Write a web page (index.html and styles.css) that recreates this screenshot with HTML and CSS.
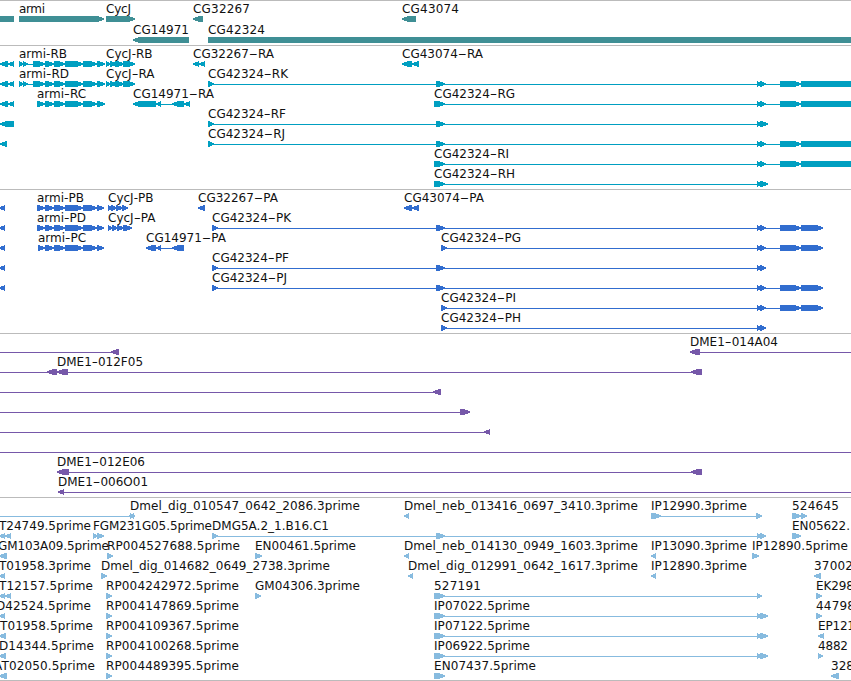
FILE: index.html
```html
<!DOCTYPE html>
<html lang="en">
<head>
<meta charset="utf-8">
<title>Genome tracks</title>
<link rel="stylesheet" href="styles.css">
</head>
<body>
<main class="browser" id="browser"></main>
<script src="tracks.js"></script>
</body>
</html>
```
FILE: styles.css
```css
body {
  margin: 0;
  background: #fff;
}

.browser {
  display: flex;
  flex-direction: column;
  width: 851px;
  height: 680px;
  overflow: hidden;
  border-bottom: 1px solid #bbb;
}

.track {
  display: flex;
  flex-direction: column;
  flex: none;
  border-top: 1px solid #bbb;
  padding-bottom: 3px;
}

.row {
  display: block;
  flex: none;
  width: 851px;
  height: 20px;
  overflow: visible;
  font: 12px "DejaVu Sans", sans-serif;
}

.row text {
  fill: #111;
}

.row polygon,
.row rect {
  shape-rendering: crispEdges;
}

.genes { fill: #3f8f95; padding-bottom: 2px; }
.genes .row { height: 21px; }
.transcripts { fill: #009fc1; }
.proteins { fill: #316dcf; }
.clones { fill: #7658a9; }
.ests { fill: #87bbdf; padding-bottom: 2px; }
```
FILE: tracks.js
```js
// Row grammar, items separated by spaces:
//   >a,b  exon pointing right     <a,b  exon pointing left
//   =a,b  plain block             -a,b  intron line
//   name@a,b  label spanning a..b
const armi = ">37,45 >45,54 >54,65 >65,83 >83,97 ";
const fullEnd = "-436,801 >436,445 >757,762 >760,766 >780,801 ";
const shortEnd = "-436,760 >436,445 >757,762 ";
const cds = fullEnd + ">801,823 ";

const tracks = [
  ["genes", [
    "=0,14 armi@19,45 >19,104 CycJ@106,131 >106,135 CG32267@193,250 <193,203 CG43074@402,459 <402,416",
    "CG14971@133,189 <133,189 CG42324@208,265 =208,851"
  ]],
  ["transcripts", [
    "<0,8 <8,14 armi-RB@19,67 -19,37 >19,24 >23,28 >33,45 " + armi + ">97,105 CycJ-RB@106,152 >106,111 >110,117 >115,124 >123,135 CG32267-RA@193,274 <193,199 <199,205 CG43074-RA@402,483 <402,412 <412,419",
    "<0,8 <8,14 armi-RD@19,69 -19,37 >19,24 >23,28 >33,45 " + armi + ">97,105 CycJ-RA@106,154 >106,111 >110,117 >115,124 >123,135 CG42324-RK@208,288 >208,214 -208,436 " + fullEnd + "=801,851",
    "<0,8 <8,14 armi-RC@37,86 " + armi + ">97,105 CG14971-RA@133,214 -156,184 <133,156 <156,161 <172,184 <184,190 CG42324-RG@434,515 >434,440 " + fullEnd + "=801,851",
    "<0,14 CG42324-RF@208,286 >208,214 -208,436 " + shortEnd + ">760,768",
    "<0,7 CG42324-RJ@208,285 >208,214 -208,436 " + fullEnd + "=801,851",
    "CG42324-RI@434,509 >434,440 " + fullEnd + "=801,851",
    "CG42324-RH@434,515 >434,440 " + shortEnd + ">760,768"
  ]],
  ["proteins", [
    "<-1,5 armi-PB@37,84 " + armi + ">97,104 CycJ-PB@108,153 >108,112 >111,117 >116,123 >122,128 CG32267-PA@198,278 <198,205 CG43074-PA@404,484 <404,412 <412,419",
    "<-1,5 armi-PD@37,86 " + armi + ">97,104 CycJ-PA@108,155 >108,113 >112,118 >117,124 >123,132 CG42324-PK@212,291 >212,218 -212,436 " + cds,
    "<-1,5 armi-PC@38,86 >38,45 " + armi.slice(7) + ">97,104 CG14971-PA@146,226 -156,184 <146,156 <156,161 <172,184 CG42324-PG@441,521 >441,447 " + cds.replace("-436,801 >436,445", "-441,801"),
    "<-1,5 CG42324-PF@212,289 >212,218 -212,436 " + shortEnd + ">760,766",
    "<-1,5 CG42324-PJ@212,287 >212,218 -212,436 " + cds,
    "CG42324-PI@441,516 >441,447 " + cds.replace("-436,801 >436,445", "-441,801"),
    "CG42324-PH@441,521 >441,447 -441,760 >757,762 >760,766"
  ]],
  ["clones", [
    "-0,118 <111,119 DME1-014A04@690,778 <690,700 -697,851",
    "DME1-012F05@57,143 -0,696 <47,57 <57,68 <691,702",
    "-0,438 <433,441",
    "-0,462 >460,470",
    "-0,488 <484,490",
    "-0,851",
    "DME1-012E06@57,145 -60,696 <57,69 <691,702",
    "DME1-006O01@58,148 -60,851 <58,64"
  ]],
  ["ests", [
    "-0,130 <129,134 >130,135 Dmel_dig_010547_0642_2086.3prime@130,360 Dmel_neb_013416_0697_3410.3prime@404,638 <404,409 IP12990.3prime@651,747 >651,661 -653,758 >756,762 524645@792,839 >792,801 >801,807",
    "T24749.5prime@-1,91 <-1,5 <5,11 FGM231G05.5prime@93,212 >93,98 >97,104 DMG5A.2_1.B16.C1@212,329 >212,218 -212,765 >436,445 >757,762 >760,766 EN05622.@792,850 >792,801",
    "GM103A09.5prime@-2,109 <-1,7 RP004527688.5prime@107,240 >107,113 EN00461.5prime@255,356 >255,262 Dmel_neb_014130_0949_1603.3prime@404,638 <404,409 IP13090.3prime@651,747 <651,656 IP12890.5prime@752,848 >752,759",
    "T01958.3prime@-1,91 <-1,5 Dmel_dig_014682_0649_2738.3prime@101,330 >101,107 Dmel_dig_012991_0642_1617.3prime@408,638 <408,413 IP12890.3prime@651,747 <651,656 37002@814,853 <814,821",
    "T12157.5prime@-1,93 <-1,5 <5,11 RP004242972.5prime@106,239 >106,112 GM04306.3prime@255,360 >255,261 527191@434,481 >434,440 >436,445 -436,758 >757,762 EK298@816,854 >816,822",
    "D42524.5prime@-4,91 <-1,5 RP004147869.5prime@106,239 >106,112 IP07022.5prime@434,530 >434,440 " + shortEnd + ">760,768 44798@816,855 >816,822",
    "T01958.5prime@0,93 <-1,6 RP004109367.5prime@106,239 >106,112 IP07122.5prime@434,530 >434,440 " + shortEnd + ">760,768 EP121@818,855 <818,824",
    "D14344.5prime@-1,94 <-1,6 RP004100268.5prime@106,239 >106,112 IP06922.5prime@434,530 >434,440 " + shortEnd + ">760,768 4882@818,848 >818,823",
    "AT02050.5prime@-6,95 <-1,7 RP004489395.5prime@106,239 >106,112 EN07437.5prime@434,536 >434,440 >436,445 328@831,854 <831,839"
  ]]
];

const NS = "http://www.w3.org/2000/svg";

function add(parent, name, attrs) {
  const node = document.createElementNS(NS, name);
  for (const key in attrs) node.setAttribute(key, attrs[key]);
  parent.appendChild(node);
  return node;
}

function drawLabel(svg, name, a, b) {
  const text = add(svg, "text", { x: a, y: 12 });
  text.textContent = name;
  const dash = name.indexOf("-");
  if (dash < 0) {
    text.setAttribute("textLength", b - a);
    return;
  }
  // Widen the hyphen itself and leave the letters at their own spacing.
  const extra = b - a - text.getComputedTextLength();
  text.textContent = name.slice(0, dash);
  const dashStart = a + text.getComputedTextLength();
  const hyphen = add(text, "tspan", {});
  hyphen.textContent = "-";
  const width = hyphen.getComputedTextLength() + extra;
  hyphen.setAttribute("x", dashStart);
  hyphen.setAttribute("textLength", width);
  hyphen.setAttribute("lengthAdjust", "spacingAndGlyphs");
  add(text, "tspan", { x: dashStart + width }).textContent = name.slice(dash + 1);
}

function drawItem(svg, item) {
  const at = item.indexOf("@");
  const [a, b] = item.slice(at > 0 ? at + 1 : 1).split(",").map(Number);
  if (at > 0) {
    drawLabel(svg, item.slice(0, at), a, b);
    return;
  }
  const head = Math.min(b - a, 7);
  const mid = head / 2;
  if (item[0] === "-") {
    add(svg, "rect", { x: a, y: 18, width: b - a, height: 1 });
  } else if (item[0] === "=") {
    add(svg, "rect", { x: a, y: 15, width: b - a, height: 6 });
  } else if (item[0] === ">") {
    add(svg, "polygon", { points: `${a},15 ${b - head},15 ${b - mid},16 ${b},17.4 ${b},18.6 ${b - mid},20 ${b - head},21 ${a},21` });
  } else {
    add(svg, "polygon", { points: `${b},15 ${a + head},15 ${a + mid},16 ${a},17.4 ${a},18.6 ${a + mid},20 ${a + head},21 ${b},21` });
  }
}

for (const [name, rows] of tracks) {
  const section = document.createElement("section");
  section.className = "track " + name;
  document.getElementById("browser").appendChild(section);
  for (const row of rows) {
    const svg = add(section, "svg", { class: "row" });
    row.trim().split(/\s+/).forEach(item => drawItem(svg, item));
  }
}
```
